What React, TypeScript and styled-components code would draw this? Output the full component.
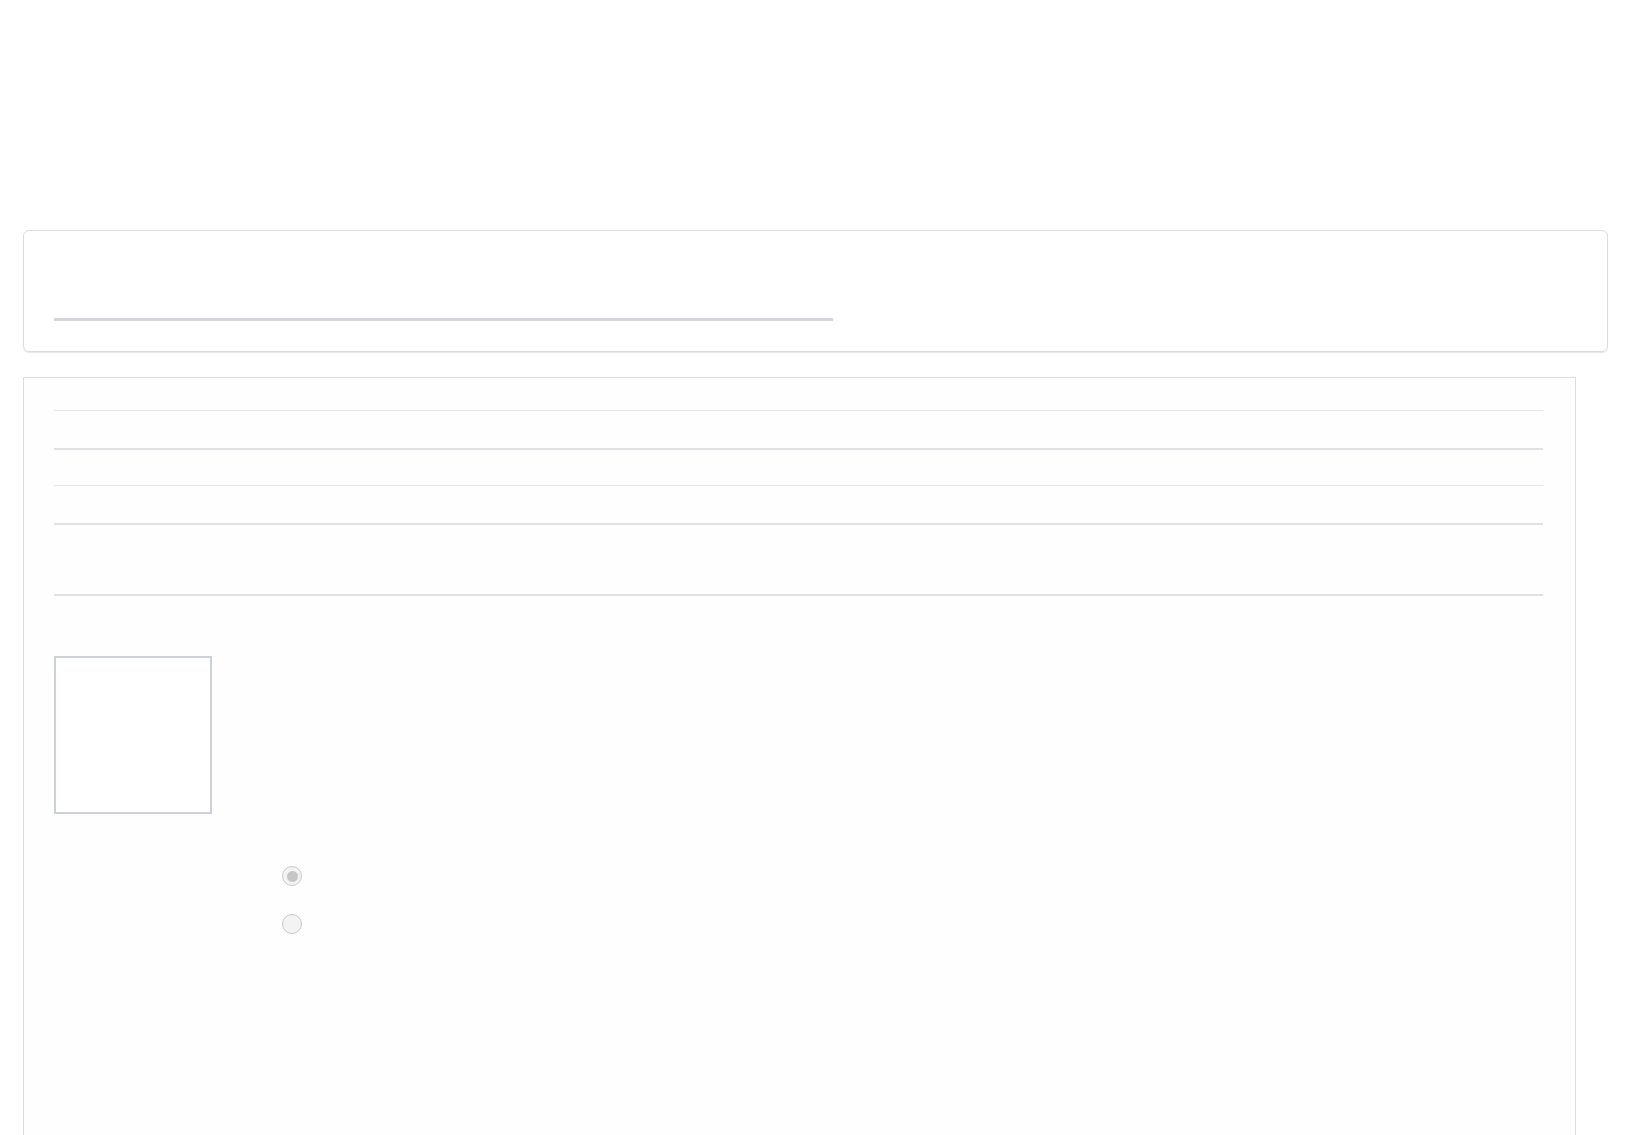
import React from "react";
import styled, { createGlobalStyle } from "styled-components";

const GlobalStyle = createGlobalStyle`
    html, body {
        margin: 0;
        padding: 0;
        background: #ffffff;
        font-family: "Liberation Sans", Arial, sans-serif;
    }
`;

const Page = styled.div`
    padding-top: 230px;
    padding-left: 23px;
    padding-right: 22px;
    display: flex;
    flex-direction: column;
    align-items: flex-start;
    gap: 25px;
`;

const HeaderCard = styled.div`
    align-self: stretch;
    height: 120px;
    border: 1px solid #dcdcdc;
    border-radius: 6px;
    box-shadow: 0 1px 1px rgba(0, 0, 0, 0.1);
    padding: 0 30px;
    display: flex;
    align-items: flex-start;
    box-sizing: content-box;
`;

const TitleBar = styled.div`
    margin-top: 87px;
    width: 779px;
    height: 3px;
    background: #d1d5db;
`;

const BodyCard = styled.div`
    width: 1553px;
    height: 760px;
    border: 1px solid #dcdcdc;
    background: #fefefe;
    padding: 32px 32px 0 30px;
    display: flex;
    flex-direction: column;
    box-sizing: border-box;
`;

const Rule = styled.div<{ $thick?: boolean; $gap: number }>`
    margin-top: ${(p) => p.$gap}px;
    height: ${(p) => (p.$thick ? 2 : 1)}px;
    background: ${(p) => (p.$thick ? "#dee1e5" : "#e6e6e6")};
`;

const Thumb = styled.div`
    margin-top: 60px;
    width: 158px;
    height: 158px;
    border: 2px solid #ccd0d7;
    box-sizing: border-box;
    background: #ffffff;
`;

const Options = styled.div`
    margin-top: 52px;
    padding-left: 228px;
    display: flex;
    flex-direction: column;
    gap: 28px;
`;

const Radio = styled.span<{ $checked?: boolean }>`
    width: 20px;
    height: 20px;
    border-radius: 50%;
    border: 1.5px solid #c9c9c9;
    background: #f3f3f3;
    box-sizing: border-box;
    display: flex;
    align-items: center;
    justify-content: center;

    &::after {
        content: "";
        display: ${(p) => (p.$checked ? "block" : "none")};
        width: 11px;
        height: 11px;
        border-radius: 50%;
        background: #c6c6c6;
    }
`;

export default function App() {
    return (
        <>
            <GlobalStyle />
            <Page>
                <HeaderCard>
                    <TitleBar />
                </HeaderCard>
                <BodyCard>
                    <Rule $gap={0} />
                    <Rule $gap={37} $thick />
                    <Rule $gap={35} />
                    <Rule $gap={37} $thick />
                    <Rule $gap={69} $thick />
                    <Thumb />
                    <Options>
                        <Radio $checked />
                        <Radio />
                    </Options>
                </BodyCard>
            </Page>
        </>
    );
}
